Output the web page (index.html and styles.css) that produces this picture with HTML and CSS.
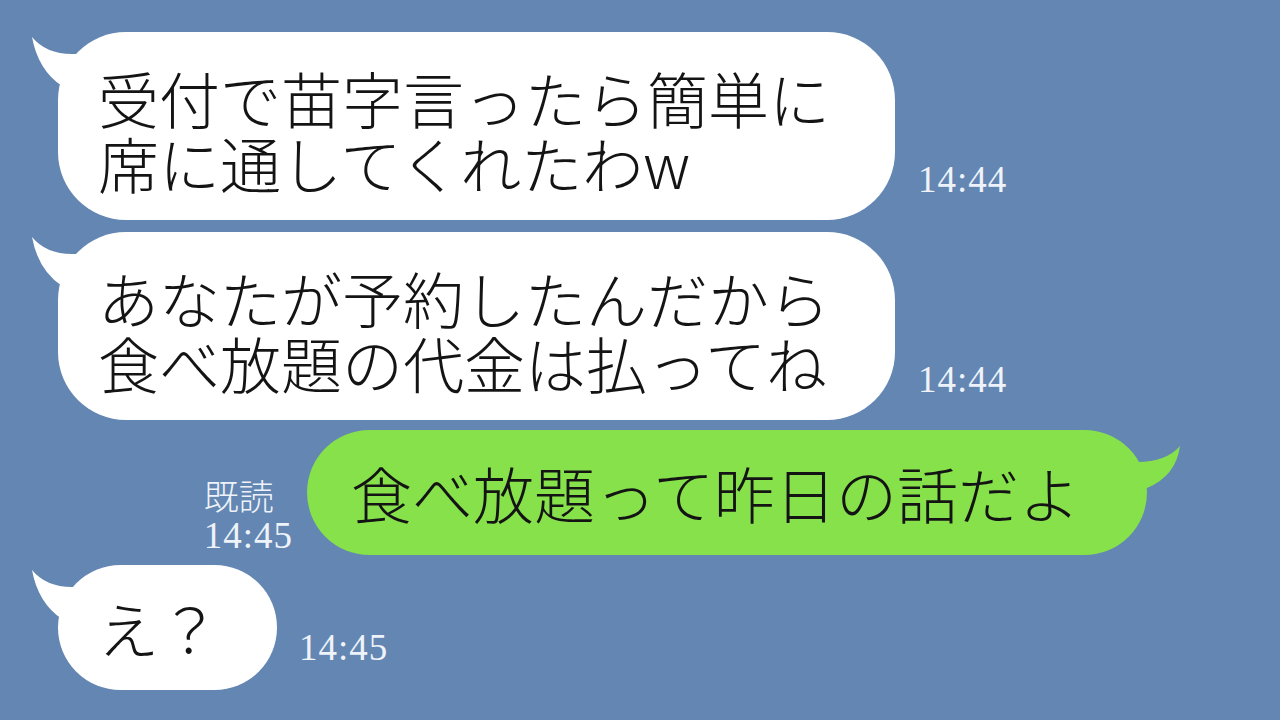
FILE: index.html
```html
<!DOCTYPE html>
<html lang="ja">
<head>
    <meta charset="UTF-8" />
    <meta name="viewport" content="width=device-width, initial-scale=1.0">
    <title>Chat</title>
    <link rel="stylesheet" href="styles.css">
</head>
<body>

<main class="chat">
    <!-- Incoming 1 -->
    <div class="row row-first">
        <div class="bubble bubble-in">
            <svg class="tail tail-in" viewBox="0 0 80 70" width="80" height="70"><path d="M4,5 Q18,22 44,22 L76,22 L76,64 L34,54 Q10,38 4,5 Z"/></svg>
            <p>受付で苗字言ったら簡単に<br>席に通してくれたわw</p>
        </div>
        <span class="time">14:44</span>
    </div>

    <!-- Incoming 2 -->
    <div class="row">
        <div class="bubble bubble-in">
            <svg class="tail tail-in" viewBox="0 0 80 70" width="80" height="70"><path d="M4,5 Q18,22 44,22 L76,22 L76,64 L34,54 Q10,38 4,5 Z"/></svg>
            <p>あなたが予約したんだから<br>食べ放題の代金は払ってね</p>
        </div>
        <span class="time">14:44</span>
    </div>

    <!-- Outgoing -->
    <div class="row row-out">
        <div class="meta">
            <span class="read">既読</span>
            <span class="time-out">14:45</span>
        </div>
        <div class="bubble bubble-out">
            <svg class="tail tail-out" viewBox="0 0 65 62" width="65" height="62"><path d="M2,20 L15,32 Q44,32 58,16 Q54,46 25,58 L2,58 Z"/></svg>
            <p>食べ放題って昨日の話だよ</p>
        </div>
    </div>

    <!-- Incoming 3 -->
    <div class="row">
        <div class="bubble bubble-in bubble-short">
            <svg class="tail tail-in" viewBox="0 0 80 70" width="80" height="70"><path d="M4,5 Q18,22 44,22 L76,22 L76,64 L34,54 Q10,38 4,5 Z"/></svg>
            <p>え？</p>
        </div>
        <span class="time time-short">14:45</span>
    </div>
</main>

</body>
</html>
```

FILE: styles.css
```css
/* Base */
* {
    margin: 0;
    padding: 0;
    box-sizing: border-box;
}

body {
    width: 1280px;
    height: 720px;
    overflow: hidden;
    background: #6486b2;
    font-family: "Noto Sans CJK JP", "Noto Sans", sans-serif;
}

.chat {
    display: flex;
    flex-direction: column;
    gap: 10px;
    padding-top: 32px;
}

/* Rows */
.row {
    display: flex;
    align-items: flex-end;
    padding-left: 58px;
}

.row-first {
    margin-bottom: 2px;
}

.row-out {
    justify-content: flex-end;
    padding-left: 0;
    padding-right: 133px;
}

/* Bubbles */
.bubble {
    position: relative;
    font-size: 61px;
    font-weight: 300;
    line-height: 65px;
    color: #141414;
    white-space: nowrap;
}

.bubble p {
    position: relative;
}

.bubble-in {
    background: #fff;
    border-radius: 68px;
    padding: 33px 65px 25px 40px;
}

.bubble-short {
    border-radius: 63px;
    padding: 30px 57px 30px 40px;
}

.bubble-out {
    background: #86e14b;
    border-radius: 63px;
    padding: 30px 67px 30px 44px;
}

/* Tails */
.tail {
    position: absolute;
    top: 0;
}

.tail-in {
    left: -30px;
    fill: #fff;
}

.tail-out {
    right: -40px;
    fill: #86e14b;
}

/* Timestamps */
.time {
    font-family: "Liberation Serif", serif;
    font-size: 37px;
    letter-spacing: 1px;
    line-height: 1;
    color: #eef3f9;
    margin: 0 0 22px 23px;
}

.time-short {
    margin: 0 0 24px 22px;
}

.meta {
    display: flex;
    flex-direction: column;
    align-items: flex-start;
    margin: 0 14px 1px 0;
    color: #eef3f9;
}

.read {
    font-size: 35px;
    font-weight: 300;
    line-height: 1;
    margin-bottom: 5px;
}

.time-out {
    font-family: "Liberation Serif", serif;
    font-size: 37px;
    letter-spacing: 1px;
    line-height: 1;
}
```
